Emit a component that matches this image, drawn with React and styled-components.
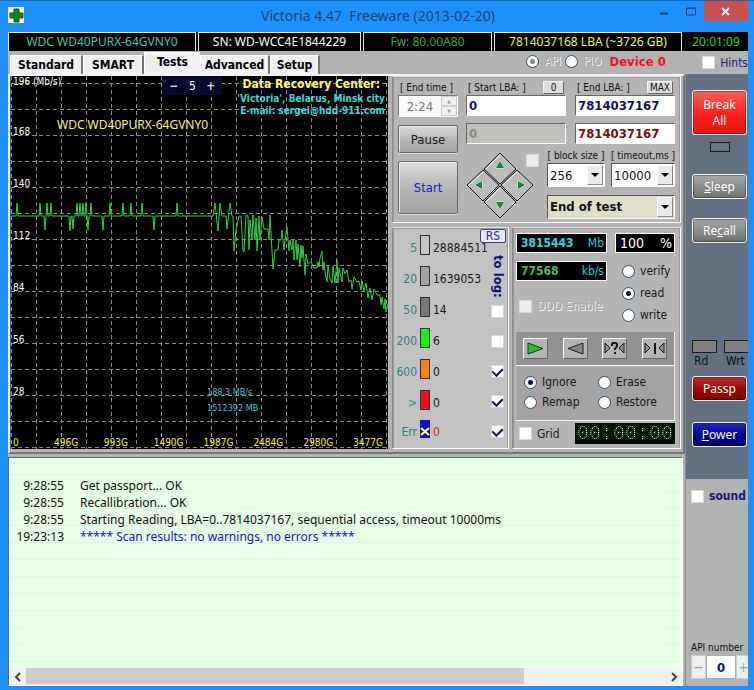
import React from "react";
import styled, { createGlobalStyle, css } from "styled-components";

const GlobalStyle = createGlobalStyle`
  * { box-sizing: border-box; }
  body {
    margin: 0;
    background: #1e90fa;
    font-family: "DejaVu Sans Condensed", "DejaVu Sans", sans-serif;
    font-size: 12px;
    color: #101010;
  }
  button, input, select { font: inherit; color: inherit; margin: 0; padding: 0; }
  table { border-collapse: collapse; }
`;

const Window = styled.div`
  display: flex;
  flex-direction: column;
  min-height: 100vh;
  padding: 0 6px 4px 8px;
  background: #1e90fa;
  border-top: 1px solid #1868b0;
  overflow: hidden;
`;

/* ---------- title bar ---------- */

const TitleBar = styled.header`
  display: grid;
  grid-template-columns: 1fr auto 1fr;
  height: 31px;
`;

const AppIcon = styled.svg`
  width: 16px;
  height: 16px;
  margin-top: 6px;
`;

const Title = styled.h1`
  margin: 0;
  padding-top: 5px;
  font: 14px/20px "Noto Sans", "Open Sans", sans-serif;
  color: #15427c;
  white-space: pre;
`;

const WindowButtons = styled.div`
  display: flex;
  justify-content: flex-end;
`;

const WindowButton = styled.button`
  display: grid;
  place-items: center;
  width: ${(p) => (p.$close ? 44 : 27)}px;
  height: 20px;
  border: 0;
  background: ${(p) => (p.$close ? "#c9504e" : "transparent")};
`;

/* ---------- drive info ---------- */

const InfoBar = styled.div`
  display: grid;
  grid-template-columns: 188fr 163fr 129fr 188fr 64fr;
  gap: 2px;
  height: 19px;
  background: #000;
`;

const InfoCell = styled.div`
  border: ${(p) => (p.$plain ? "0" : "1px solid #e8e8e8")};
  padding-top: ${(p) => (p.$plain ? 1 : 0)}px;
  color: ${(p) => p.$color};
  font-family: "Noto Sans", "Open Sans", sans-serif;
  font-size: 12px;
  line-height: 18px;
  text-align: center;
  white-space: nowrap;
`;

/* ---------- tabs ---------- */

const TabRow = styled.div`
  display: flex;
  height: 23px;
  background: #b3b3b3;
`;

const Tabs = styled.div`
  display: flex;
  flex: 1;
  align-items: flex-end;
  padding-left: 2px;
`;

const Tab = styled.button`
  width: ${(p) => p.$width}px;
  height: ${(p) => (p.$active ? 22 : 19)}px;
  padding-bottom: ${(p) => (p.$active ? 4 : 0)}px;
  border: 0;
  border-top: 1px solid #fff;
  border-right: ${(p) => (p.$active ? "0" : "2px solid #777")};
  border-left: 1px solid #fff;
  background: #f0f0f0;
  color: #000;
  font-weight: bold;
  font-size: 12px;
  line-height: 16px;
  white-space: nowrap;
`;

const DeviceGroup = styled.div`
  display: flex;
  align-items: center;
  gap: 4px;
  width: 172px;
  height: 20px;
  margin-right: 4px;
`;

const DeviceName = styled.strong`
  margin-left: 4px;
  color: #f4121c;
  font-size: 13px;
`;

/* ---------- shared inputs ---------- */

const CheckLabel = styled.label`
  display: flex;
  align-items: center;
  gap: 5px;
  font-size: 12px;
  font-weight: ${(p) => (p.$bold ? "bold" : "normal")};
  color: ${(p) => p.$color || "#181818"};
  white-space: nowrap;
  ${(p) =>
    p.$off &&
    css`
      color: #a6a6a6;
      text-shadow: 1px 1px 0 #f2f2f2;
    `}
`;

const CheckInput = styled.input.attrs({ type: "checkbox" })`
  appearance: none;
  display: block;
  flex: none;
  width: 13px;
  height: 13px;
  border: 1px solid #d8d8d8;
  background: ${(p) => (p.disabled ? "#ececec" : "#fff")};
  &:checked::after {
    content: "";
    display: block;
    width: 5px;
    height: 8px;
    margin: 0 auto;
    border: solid #101048;
    border-width: 0 2px 2px 0;
    transform: rotate(45deg);
  }
`;

const RadioInput = styled.input.attrs({ type: "radio" })`
  appearance: none;
  flex: none;
  width: 13px;
  height: 13px;
  border: 1px solid #33536e;
  border-radius: 50%;
  background: #fcfeff;
  &:checked {
    background: radial-gradient(circle, ${(p) => (p.disabled ? "#888" : "#08083c")} 2px, #fcfeff 3px);
  }
`;

const PushButton = styled.button`
  height: ${(p) => p.$height}px;
  border: 1px solid #686868;
  border-radius: 2px;
  background: linear-gradient(#dadada, #b4b4b4 55%, #a4a4a4);
  box-shadow: inset 1px 1px 0 #eaeaea, 0 1px 0 #ddd;
  color: ${(p) => p.$color || "#181818"};
  font-size: 13px;
`;

const TinyButton = styled.button`
  width: ${(p) => p.$width}px;
  height: 13px;
  border: 1px solid #666;
  border-color: #f8f8f8 #666 #666 #f8f8f8;
  background: #dedede;
  font-size: 10px;
  line-height: 10px;
`;

/* ---------- page body ---------- */

const Body = styled.div`
  display: flex;
  flex: 1;
`;

const Main = styled.main`
  display: flex;
  flex: 1;
  min-width: 0;
  flex-direction: column;
  background: #b3b3b3;
`;

const TestsPanel = styled.section`
  display: flex;
  border: 2px solid #f4f4f4;
  border-bottom-color: #777;
  border-right-color: #777;
  padding-bottom: 3px;
`;

/* ---------- speed graph ---------- */

const Graph = styled.div`
  position: relative;
  flex: 1;
  min-width: 0;
  height: 373px;
  border-left: 1px solid #555;
  background: #000;
`;

const GraphPlot = styled.svg`
  position: absolute;
  inset: 0;
  width: 100%;
  height: 100%;
`;

const GraphOverlay = styled.div`
  position: relative;
  display: flex;
  height: 100%;
  padding-left: 2px;
`;

const SpeedScale = styled.div`
  display: flex;
  flex-direction: column;
  width: 44px;
  color: #fff;
  font-size: 10px;
  line-height: 12px;
  white-space: nowrap;
`;

const SpeedMark = styled.span`
  height: 52px;
  &:first-child { height: 50px; }
`;

const GraphName = styled.div`
  flex: 1;
  padding-top: 41px;
  color: #f4f470;
  font: 12px/16px "Noto Sans", "Open Sans", sans-serif;
  white-space: nowrap;
`;

const GraphCorner = styled.div`
  position: absolute;
  top: 0;
  right: 0;
  display: flex;
  justify-content: space-between;
  gap: 15px;
  padding-right: 3px;
`;

const ZoomControl = styled.div`
  display: flex;
  align-items: center;
  justify-content: space-between;
  width: 60px;
  height: 19px;
  padding: 0 7px;
  background: #08082c;
  color: #fff;
  font-size: 12px;
`;

const ZoomButton = styled.button`
  border: 0;
  background: transparent;
  color: #ddd;
  font-weight: bold;
`;

const Credit = styled.div`
  color: #32d8dc;
  font-size: 10px;
  font-weight: bold;
  line-height: 12px;
  text-align: right;
  white-space: nowrap;
`;

const CreditTitle = styled.div`
  padding-right: 5px;
  color: #ffff50;
  font-size: 12px;
  line-height: 17px;
`;

const CursorInfo = styled.div`
  position: absolute;
  left: 52%;
  bottom: 33px;
  color: #38c8cc;
  font-size: 9px;
  line-height: 16px;
`;

const SizeScale = styled.div`
  position: absolute;
  right: 0;
  bottom: 0;
  left: 2px;
  display: grid;
  grid-template-columns: 41px repeat(6, 50fr) 35fr;
  color: #f0f030;
  font-size: 10px;
  line-height: 12px;
`;

/* ---------- controls ---------- */

const Controls = styled.div`
  display: flex;
  flex-direction: column;
  gap: 4px;
  width: 295px;
  padding: 0 2px 0 4px;
`;

const Frame = styled.div`
  border: 1px solid #fff;
  border-left-color: #8c8c8c;
  border-top-color: #e4e4e4;
  box-shadow: inset 1px 1px 0 #999, inset -1px 0 0 #999;
  background: ${(p) => p.$tone || "#b5b5b5"};
`;

const RangeFrame = styled(Frame)`
  display: flex;
  gap: 8px;
  height: 147px;
  padding: 4px 5px;
`;

const ActionColumn = styled.div`
  display: flex;
  flex-direction: column;
  width: 60px;
`;

const RangeColumn = styled.div`
  display: flex;
  flex: 1;
  min-width: 0;
  flex-direction: column;
`;

const FieldHead = styled.div`
  display: flex;
  justify-content: space-between;
  height: 14px;
  padding: 0 2px;
  font-size: 10px;
  line-height: 14px;
  white-space: nowrap;
`;

const TimeSpinner = styled.div`
  display: flex;
  height: 22px;
  margin-bottom: 8px;
  border: 1px solid #888;
  border-color: #777 #fff #fff #777;
  background: #fafafa;
`;

const TimeInput = styled.input`
  flex: 1;
  width: 30px;
  border: 0;
  background: transparent;
  color: #777;
  font-size: 13px;
  text-align: center;
`;

const SpinArrows = styled.div`
  display: grid;
  width: 16px;
`;

const SpinArrow = styled.button`
  display: grid;
  place-items: center;
  border: 1px solid #ccc;
  background: #f0f0f0;
  color: #999;
  font-size: 5px;
  line-height: 5px;
`;

const StartHolder = styled.div`
  display: grid;
  margin-top: 8px;
`;

const LbaGrid = styled.div`
  display: grid;
  grid-template-columns: 1fr 1fr;
  column-gap: 9px;
`;

const LbaInput = styled.input`
  width: 100%;
  height: 21px;
  margin-bottom: 7px;
  padding-left: 2px;
  border: 1px solid #888;
  border-color: #666 #fff #fff #666;
  background: ${(p) => (p.disabled ? "#c0c0bc" : "#fff")};
  color: ${(p) => p.$color};
  font-size: 13px;
  font-weight: bold;
`;

const SeekRow = styled.div`
  display: flex;
  justify-content: space-between;
`;

const SeekPad = styled.svg`
  width: 68px;
  height: 68px;
`;

const SeekCheck = styled(CheckInput)`
  margin: 3px 0 0 -16px;
`;

const SeekOptions = styled.div`
  display: grid;
  grid-template-columns: 58px 64px;
  column-gap: 6px;
  width: 128px;
  margin-top: -2px;
`;

const SmallLabel = styled.label`
  height: 14px;
  font-size: 10px;
  line-height: 13px;
  white-space: nowrap;
  text-align: center;
`;

const SelectBox = styled.div`
  position: relative;
  display: grid;
  ${(p) => p.$wide && css`
    grid-column: 1 / -1;
    margin-top: 7px;
  `}
`;

const SelectField = styled.select`
  appearance: none;
  width: 100%;
  height: 24px;
  padding-left: 2px;
  border: 1px solid #777;
  border-color: #555 #fff #fff #555;
  border-radius: 0;
  background: ${(p) => (p.$wide ? "#dfdfc9" : "#fff")};
  font-size: 13px;
  font-weight: ${(p) => (p.$wide ? "bold" : "normal")};
`;

const SelectArrow = styled.svg`
  position: absolute;
  top: 2px;
  right: 2px;
  width: 16px;
  height: 20px;
  background: #e9e9e9;
  border: 1px solid #fff;
  border-right-color: #888;
  border-bottom-color: #888;
  pointer-events: none;
`;

const LowerControls = styled.div`
  display: grid;
  grid-template-columns: 117px 1fr;
  gap: 3px;
`;

/* ---------- block timing legend ---------- */

const LegendFrame = styled(Frame)`
  display: flex;
  height: 222px;
  padding: 1px 2px 0 0;
`;

const LegendList = styled.div`
  flex: 1;
  min-width: 0;
`;

const LegendRow = styled.div`
  display: grid;
  grid-template-columns: 24px 10px 1fr;
  align-items: center;
  column-gap: 3px;
  height: ${(p) => (p.$last ? 27 : 31)}px;
  font-size: 12px;
  white-space: nowrap;
`;

const LegendLimit = styled.span`
  padding-top: 7px;
  color: #2c8080;
  text-align: right;
`;

const LegendCount = styled.span`
  padding-top: 7px;
  color: ${(p) => p.$color};
`;

const Swatch = styled.span`
  height: 20px;
  border: 1px solid #303030;
  background: ${(p) => p.$color};
`;

const LogColumn = styled.div`
  display: flex;
  flex-direction: column;
  align-items: flex-end;
  width: 26px;
`;

const RsButton = styled.button`
  width: 26px;
  height: 14px;
  border: 1px solid #3838b0;
  border-radius: 2px;
  background: #ececf4;
  color: #2828b0;
  font-size: 12px;
  line-height: 11px;
`;

const ToLog = styled.span`
  height: 48px;
  margin: 12px 0 2px;
  writing-mode: vertical-rl;
  color: #10107c;
  font-size: 13px;
  font-weight: bold;
  line-height: 15px;
`;

const LogChecks = styled.div`
  display: grid;
  row-gap: 17px;
  padding-right: 2px;
`;

/* ---------- scan status ---------- */

const ScanFrame = styled(Frame)`
  display: flex;
  flex-direction: column;
  height: 222px;
  padding: 5px 5px 2px 3px;
`;

const ScanTop = styled.div`
  display: flex;
  justify-content: space-between;
  height: 99px;
`;

const ScanColumn = styled.div`
  display: flex;
  flex-direction: column;
  gap: ${(p) => p.$gap}px;
  width: ${(p) => p.$width}px;
`;

const Readout = styled.output`
  display: flex;
  justify-content: space-between;
  height: 20px;
  padding: 0 2px 0 4px;
  border: 1px solid #fff;
  background: #000;
  color: ${(p) => p.$color};
  font-size: ${(p) => p.$size || 12}px;
  font-weight: ${(p) => (p.$size ? "normal" : "bold")};
  line-height: 18px;
  white-space: nowrap;
`;

const Unit = styled.span`
  color: ${(p) => p.$color || "#32c8d0"};
  font-weight: normal;
`;

const ModeList = styled.div`
  display: grid;
  row-gap: 8px;
  padding: 7px 0 0 7px;
`;

const DumpOption = styled.div`
  padding: 10px 0 0 3px;
`;

const PlayStrip = styled.div`
  display: flex;
  align-items: center;
  justify-content: space-between;
  height: 34px;
  padding: 0 7px;
  border-bottom: 1px solid #f4f4f4;
  border-right: 1px solid #eee;
  background: #939393;
`;

const PlayButton = styled.button`
  display: grid;
  place-items: center;
  width: 25px;
  height: 21px;
  border: 1px solid #555;
  border-color: #f4f4f4 #666 #666 #f4f4f4;
  background: #b4b4b4;
`;

const ActionStrip = styled.div`
  display: grid;
  grid-template-columns: 74px 1fr;
  align-content: start;
  row-gap: 6px;
  height: 54px;
  margin-top: 1px;
  padding: 8px 0 0 8px;
  border-bottom: 1px solid #f4f4f4;
  border-right: 1px solid #eee;
  background: #a3a3a3;
`;

const GridStrip = styled.div`
  display: flex;
  flex: 1;
  align-items: center;
  justify-content: space-between;
  padding-left: 3px;
`;

const Lcd = styled.output`
  width: 100px;
  height: 21px;
  background: #041004;
  text-align: center;
`;

const LcdDigits = styled.span`
  font: 20px/21px "Liberation Mono", monospace;
  color: transparent;
  background: conic-gradient(#dce8cc 25%, #304030 0) 0 0 / 2px 2px;
  background-clip: text;
`;

/* ---------- log ---------- */

const LogPanel = styled.section`
  display: flex;
  flex: 1;
  flex-direction: column;
  margin: 3px 2px 0 0;
  border: 1px solid #666;
  border-right-color: #fff;
  border-bottom-color: #fff;
  background: repeating-linear-gradient(#e6ffe6 0 16px, #dff8df 16px 17px);
`;

const LogBody = styled.div`
  flex: 1;
  padding-top: 19px;
`;

const LogTable = styled.table`
  width: 100%;
  font-family: "Noto Sans", "Open Sans", sans-serif;
  td { height: 17px; padding: 0; line-height: 17px; white-space: nowrap; }
  td:first-child { width: 65px; padding-right: 10px; text-align: right; }
  td:last-child { padding-left: 6px; }
`;

const LogLine = styled.tr`
  td:last-child { color: ${(p) => (p.$done ? "#1414c8" : "#101010")}; }
`;

const ScrollBar = styled.div`
  display: flex;
  height: 17px;
  background: #f2f0f0;
`;

const ScrollButton = styled.button`
  display: grid;
  place-items: center;
  width: 17px;
  border: 0;
  background: transparent;
`;

const ScrollTrack = styled.div`
  flex: 1;
`;

const ScrollThumb = styled.div`
  width: 78%;
  height: 16px;
  background: #cccccc;
`;

/* ---------- sidebar ---------- */

const Sidebar = styled.aside`
  display: flex;
  width: 63px;
  flex-direction: column;
  border-left: 1px solid #8a8a8a;
  background: #b3b3b3;
  overflow: hidden;
`;

const PowerPanel = styled.div`
  display: flex;
  flex-direction: column;
  height: 405px;
  padding: 16px 1px 0 6px;
  background: #627081;
`;

const SideButton = styled.button`
  flex: none;
  height: ${(p) => (p.$tall ? 45 : 25)}px;
  margin-bottom: ${(p) => p.$after}px;
  border: 1px solid #f4f4f4;
  border-radius: 3px;
  box-shadow: inset 0 0 0 1px rgba(0, 0, 0, 0.3);
  background: ${(p) => p.$fill};
  color: #fff;
  font-family: "Noto Sans", "Open Sans", sans-serif;
  font-size: 12px;
  line-height: 16px;
`;

const Led = styled.span`
  display: block;
  flex: none;
  width: ${(p) => p.$width}px;
  height: ${(p) => (p.$small ? 10 : 13)}px;
  border: 1px solid #181818;
  background: ${(p) => (p.$small ? "#667283" : "#808080")};
`;

const BusyHolder = styled.div`
  display: flex;
  justify-content: center;
  margin: 7px 0 22px;
`;

const LedRow = styled.div`
  display: flex;
  flex: none;
  gap: 7px;
  margin: 97px 0 7px;
  font-size: 12px;
  line-height: 16px;
`;

const LedLabel = styled.span`
  display: block;
  padding-left: 2px;
`;

const SidebarLower = styled.div`
  display: flex;
  flex: 1;
  flex-direction: column;
  justify-content: space-between;
  padding: 10px 0 7px 5px;
`;

const ApiBox = styled.div`
  font-size: 10px;
  white-space: nowrap;
`;

const ApiSpinner = styled.div`
  display: grid;
  grid-template-columns: 15px 30px 15px;
  height: 24px;
  margin-top: 2px;
`;

const ApiButton = styled.button`
  border: 1px solid #ccc;
  background: #efefef;
  color: #a0a0a0;
  font-size: 14px;
  line-height: 14px;
`;

const ApiInput = styled.input`
  width: 30px;
  border: 1px solid #aaa;
  background: #fff;
  color: #10106c;
  font-size: 13px;
  font-weight: bold;
  text-align: center;
`;

const TABS = [
  ["Standard", 73], ["SMART", 61], ["Tests", 56], ["Advanced", 70], ["Setup", 50],
];

const LEGEND = [
  ["5", "#c4c4c4", "28884511"], ["20", "#a0a0a0", "1639053"], ["50", "#787878", "14"],
  ["200", "#10f410", "6"], ["600", "#f58208", "0"], [">", "#f01010", "0"],
];

const LOG = [
  ["9:28:55", "Get passport... OK"],
  ["9:28:55", "Recallibration... OK"],
  ["9:28:55", "Starting Reading, LBA=0..7814037167, sequential access, timeout 10000ms"],
  ["19:23:13", "***** Scan results: no warnings, no errors *****"],
];

const BASE = 140;
const SPIKES = [
  [6, 127], [29, 127], [34, 154], [36, 127], [40, 127], [59, 155], [62, 153], [66, 127],
  [69, 127], [72, 127], [75, 127], [77, 154], [80, 127], [92, 154], [99, 127], [112, 127],
  [120, 127], [131, 127], [143, 154], [166, 127],
];
const TAIL = [
  [202, 140], [204, 127], [207, 155], [209, 127], [211, 140], [215, 140], [216, 153], [219, 127],
  [221, 140], [222, 140], [223, 175], [225, 154], [228, 140], [230, 140], [232, 175], [233, 176],
  [235, 139], [237, 140], [238, 174], [239, 144], [241, 164], [242, 139], [244, 164], [245, 142],
  [246, 175], [248, 140], [249, 164], [251, 141], [253, 153], [257, 153], [258, 164], [259, 139],
  [262, 193], [264, 174], [267, 174], [268, 164], [270, 164], [271, 154], [273, 174], [274, 164],
  [276, 151], [278, 175], [279, 164], [281, 174], [282, 163], [283, 184], [285, 164], [286, 184],
  [287, 168], [289, 191], [290, 169], [291, 182], [292, 170], [294, 199], [295, 178], [297, 188],
  [300, 186], [303, 192], [306, 192], [307, 186], [308, 191], [309, 182], [311, 175], [312, 194],
  [313, 186], [314, 196], [316, 206], [317, 190], [319, 203], [321, 207], [322, 190], [324, 207],
  [326, 184], [327, 207], [328, 192], [331, 206], [332, 192], [334, 198], [336, 194], [338, 206],
  [340, 204], [341, 213], [343, 201], [346, 206], [348, 205], [350, 214], [351, 205], [353, 215],
  [355, 207], [357, 222], [359, 212], [361, 224], [363, 213], [366, 219], [369, 219], [370, 229],
  [371, 221], [373, 233], [374, 223], [375, 236], [377, 228],
];
const SPEED_LINE = [
  [0, BASE],
  ...SPIKES.flatMap(([x, y]) => [[x - 1, BASE], [x, y], [x + 1, BASE]]),
  ...TAIL,
].map((p) => p.join(",")).join(" ");

const COLS = Array.from({ length: 16 }, (_, i) => i * 25);
const ROWS = Array.from({ length: 15 }, (_, i) => i * 26 + 7);

function Check({ label, bold, color, disabled }) {
  return (
    <CheckLabel $bold={bold} $color={color} $off={disabled}>
      <CheckInput disabled={disabled} />
      {label}
    </CheckLabel>
  );
}

function Radio({ label, name, checked, disabled }) {
  return (
    <CheckLabel $off={disabled}>
      <RadioInput name={name} defaultChecked={checked} disabled={disabled} />
      {label}
    </CheckLabel>
  );
}

function Dropdown({ id, value, wide, label }) {
  return (
    <SelectBox $wide={wide}>
      <SelectField id={id} $wide={wide} aria-label={label}>
        <option>{value}</option>
      </SelectField>
      <SelectArrow viewBox="0 0 14 18"><path d="M3 7h8l-4 4z" /></SelectArrow>
    </SelectBox>
  );
}

function SpeedGraph() {
  return (
    <Graph>
      <GraphPlot viewBox="0 0 377 373" preserveAspectRatio="none">
        <g stroke="#8a8a8a" strokeDasharray="4 3" shapeRendering="crispEdges">
          {COLS.map((x) => <line key={x} x1={x} x2={x} y1="0" y2="373" />)}
          {ROWS.map((y) => <line key={y} x1="0" x2="377" y1={y} y2={y} />)}
        </g>
        <polyline points={SPEED_LINE} fill="none" stroke="#30d248" />
      </GraphPlot>
      <GraphOverlay>
        <SpeedScale>
          {["196 (Mb/s)", "168", "140", "112", "84", "56", "28"].map((v) => (
            <SpeedMark key={v}>{v}</SpeedMark>
          ))}
        </SpeedScale>
        <GraphName>WDC WD40PURX-64GVNY0</GraphName>
      </GraphOverlay>
      <GraphCorner>
        <ZoomControl>
          <ZoomButton aria-label="Zoom out">−</ZoomButton>5<ZoomButton aria-label="Zoom in">+</ZoomButton>
        </ZoomControl>
        <Credit>
          <CreditTitle>Data Recovery Center:</CreditTitle>
          <div>'Victoria', Belarus, Minsk city</div>
          <div>E-mail: sergei@hdd-911.com</div>
        </Credit>
      </GraphCorner>
      <CursorInfo>
        <div>188,3 MB/s</div>
        <div>1512392 MB</div>
      </CursorInfo>
      <SizeScale>
        {["0", "496G", "993G", "1490G", "1987G", "2484G", "2980G", "3477G"].map((v) => (
          <span key={v}>{v}</span>
        ))}
      </SizeScale>
    </Graph>
  );
}

function RangeControls() {
  return (
    <RangeFrame>
      <ActionColumn>
        <FieldHead><label htmlFor="end-time">[ End time ]</label></FieldHead>
        <TimeSpinner>
          <TimeInput id="end-time" defaultValue="2:24" />
          <SpinArrows>
            <SpinArrow aria-label="Later">▲</SpinArrow>
            <SpinArrow aria-label="Earlier">▼</SpinArrow>
          </SpinArrows>
        </TimeSpinner>
        <PushButton $height={28}>Pause</PushButton>
        <StartHolder><PushButton $height={53} $color="#1c1cb8">Start</PushButton></StartHolder>
      </ActionColumn>
      <RangeColumn>
        <LbaGrid>
          <FieldHead>
            <label htmlFor="start-lba">[ Start LBA: ]</label>
            <TinyButton $width={21}>0</TinyButton>
          </FieldHead>
          <FieldHead>
            <label htmlFor="end-lba">[ End LBA: ]</label>
            <TinyButton $width={26}>MAX</TinyButton>
          </FieldHead>
          <LbaInput id="start-lba" defaultValue="0" $color="#10106c" />
          <LbaInput id="end-lba" defaultValue="7814037167" $color="#10106c" />
          <LbaInput aria-label="Current start" defaultValue="0" disabled $color="#8c8c88" />
          <LbaInput aria-label="Current end" defaultValue="7814037167" $color="#7c0c10" />
        </LbaGrid>
        <SeekRow>
          <SeekPad viewBox="0 0 68 68">
            <g fill="#bcbcbc" stroke="#181818">
              <path d="M34 2l16 16-16 15-16-15z" />
              <path d="M17 19l16 15-16 16L1 34z" />
              <path d="M51 19l16 15-16 16-16-16z" />
              <path d="M34 35l16 16-16 16-16-16z" />
            </g>
            <path d="M34 4L20 18M17 21L3 34M51 21L37 34M34 37L20 51" stroke="#fff" />
            <g fill="#1f8040" stroke="#e4f4e4" strokeWidth="1" paintOrder="stroke">
              <path d="M34 10l4 7h-8zM9 34l7-4v8zM59 34l-7-4v8zM34 58l4-7h-8z" />
            </g>
          </SeekPad>
          <SeekCheck aria-label="Seek lock" disabled />
          <SeekOptions>
            <SmallLabel htmlFor="block">[ block size ]</SmallLabel>
            <SmallLabel htmlFor="timeout">[ timeout,ms ]</SmallLabel>
            <Dropdown id="block" value="256" />
            <Dropdown id="timeout" value="10000" />
            <Dropdown id="after" value="End of test" label="After scan" wide />
          </SeekOptions>
        </SeekRow>
      </RangeColumn>
    </RangeFrame>
  );
}

function Legend() {
  return (
    <LegendFrame $tone="#c2c2c2">
      <LegendList>
        {LEGEND.map(([limit, color, count]) => (
          <LegendRow key={limit}>
            <LegendLimit>{limit}</LegendLimit>
            <Swatch $color={color} />
            <LegendCount $color="#181818">{count}</LegendCount>
          </LegendRow>
        ))}
        <LegendRow $last>
          <LegendLimit>Err</LegendLimit>
          <svg viewBox="0 0 10 18" width="10" height="18">
            <path d="M0 0h10v18H0z" fill="#1010c8" />
            <path d="M0 8h10v7H0z" fill="#202020" />
            <path d="M1 8l8 7M9 8l-8 7" stroke="#fff8c8" strokeWidth="2" />
          </svg>
          <LegendCount $color="#e81c1c">0</LegendCount>
        </LegendRow>
      </LegendList>
      <LogColumn>
        <RsButton>RS</RsButton>
        <ToLog>to log:</ToLog>
        <LogChecks>
          {["50", "200", "600", ">", "Err"].map((v, i) => (
            <CheckInput key={v} aria-label={`Log ${v}`} defaultChecked={i > 1} />
          ))}
        </LogChecks>
      </LogColumn>
    </LegendFrame>
  );
}

function ScanStatus() {
  return (
    <ScanFrame>
      <ScanTop>
        <ScanColumn $width={91} $gap={8}>
          <Readout $color="#30d4e0">3815443 <Unit>Mb</Unit></Readout>
          <Readout $color="#50b85c">77568 <Unit>kb/s</Unit></Readout>
          <DumpOption><Check label="DDD Enable" disabled /></DumpOption>
        </ScanColumn>
        <ScanColumn $width={60} $gap={4}>
          <Readout $color="#fff" $size={14}>100 <Unit $color="#fff">%</Unit></Readout>
          <ModeList>
            <Radio name="mode" label="verify" />
            <Radio name="mode" label="read" checked />
            <Radio name="mode" label="write" />
          </ModeList>
        </ScanColumn>
      </ScanTop>
      <PlayStrip>
        <PlayButton aria-label="Forward">
          <svg width="19" height="15"><path d="M2 2v11l15-5.5z" fill="#28c028" stroke="#104010" /></svg>
        </PlayButton>
        <PlayButton aria-label="Backward">
          <svg width="19" height="15"><path d="M17 2v11L2 7.5z" fill="#858585" stroke="#202020" /></svg>
        </PlayButton>
        <PlayButton aria-label="Random">
          <svg width="23" height="17" stroke="#181818">
            <path d="M2 3v10l5-5zM21 3v10l-5-5z" fill="#909090" />
            <path d="M9 6V4l1-1h3l1 1v2l-2 3v1M12 12v2" fill="none" strokeWidth="2" />
          </svg>
        </PlayButton>
        <PlayButton aria-label="Butterfly">
          <svg width="23" height="17" stroke="#181818">
            <path d="M2 3v10l5-5zM21 3v10l-5-5z" fill="#909090" />
            <path d="M12 3v11" strokeWidth="2" />
          </svg>
        </PlayButton>
      </PlayStrip>
      <ActionStrip>
        <Radio name="bad" label="Ignore" checked />
        <Radio name="bad" label="Erase" />
        <Radio name="bad" label="Remap" />
        <Radio name="bad" label="Restore" />
      </ActionStrip>
      <GridStrip>
        <Check label="Grid" />
        <Lcd><LcdDigits>00:00:00</LcdDigits></Lcd>
      </GridStrip>
    </ScanFrame>
  );
}

export default function App() {
  return (
    <Window>
      <GlobalStyle />
      <TitleBar>
        <AppIcon viewBox="0 0 16 16">
          <path d="M0 0h16v16H0z" fill="#fff" />
          <path d="M6 2h5v4h4v5h-4v4H6v-4H2V6h4z" fill="#0c8414" stroke="#085c0c" />
        </AppIcon>
        <Title>{"Victoria 4.47  Freeware (2013-02-20)"}</Title>
        <WindowButtons>
          <WindowButton aria-label="Minimize">
            <svg width="10" height="10"><path d="M1 7.5h8" stroke="#123c70" strokeWidth="2" /></svg>
          </WindowButton>
          <WindowButton aria-label="Maximize">
            <svg width="10" height="9"><path d="M.5 1h9v7h-9zM0 1.5h10" fill="none" stroke="#123c70" /></svg>
          </WindowButton>
          <WindowButton $close aria-label="Close">
            <svg width="10" height="9"><path d="M1 1l7 7M8 1L1 8" stroke="#fff" strokeWidth="2" /></svg>
          </WindowButton>
        </WindowButtons>
      </TitleBar>

      <InfoBar>
        <InfoCell $color="#40c4ac">WDC WD40PURX-64GVNY0</InfoCell>
        <InfoCell $color="#fff">SN: WD-WCC4E1844229</InfoCell>
        <InfoCell $color="#2ca83c">Fw: 80.00A80</InfoCell>
        <InfoCell $color="#f2f260">7814037168 LBA (~3726 GB)</InfoCell>
        <InfoCell $color="#2cd048" $plain>20:01:09</InfoCell>
      </InfoBar>

      <TabRow>
        <Tabs role="tablist">
          {TABS.map(([name, width]) => (
            <Tab key={name} role="tab" $width={width} $active={name === "Tests"}>{name}</Tab>
          ))}
        </Tabs>
        <DeviceGroup>
          <Radio name="access" label="API" checked disabled />
          <Radio name="access" label="PIO" disabled />
          <DeviceName>Device 0</DeviceName>
        </DeviceGroup>
        <Check label="Hints" color="#241c80" />
      </TabRow>

      <Body>
        <Main>
          <TestsPanel>
            <SpeedGraph />
            <Controls>
              <RangeControls />
              <LowerControls>
                <Legend />
                <ScanStatus />
              </LowerControls>
            </Controls>
          </TestsPanel>
          <LogPanel>
            <LogBody>
              <LogTable>
                <tbody>
                  {LOG.map(([time, text], i) => (
                    <LogLine key={i} $done={i === 3}><td>{time}</td><td>{text}</td></LogLine>
                  ))}
                </tbody>
              </LogTable>
            </LogBody>
            <ScrollBar>
              <ScrollButton aria-label="Scroll left">
                <svg width="8" height="10"><path d="M6 1L2 5l4 4" fill="none" stroke="#444" strokeWidth="2" /></svg>
              </ScrollButton>
              <ScrollTrack><ScrollThumb /></ScrollTrack>
              <ScrollButton aria-label="Scroll right">
                <svg width="8" height="10"><path d="M2 1l4 4-4 4" fill="none" stroke="#444" strokeWidth="2" /></svg>
              </ScrollButton>
            </ScrollBar>
          </LogPanel>
        </Main>

        <Sidebar>
          <PowerPanel>
            <SideButton $tall $fill="linear-gradient(#ff6058, #ff1c1c 60%, #e81010)" $after={0}>
              Break<br />All
            </SideButton>
            <BusyHolder><Led $small $width={20} /></BusyHolder>
            <SideButton $fill="linear-gradient(#a8a8a8, #707070)" $after={19}><u>S</u>leep</SideButton>
            <SideButton $fill="linear-gradient(#a8a8a8, #707070)" $after={0}>Re<u>c</u>all</SideButton>
            <LedRow>
              <div><Led $width={25} /><LedLabel>Rd</LedLabel></div>
              <div><Led $width={25} /><LedLabel>Wrt</LedLabel></div>
            </LedRow>
            <SideButton $fill="linear-gradient(#c03030, #a00808 50%, #800000)" $after={21}>Passp</SideButton>
            <SideButton $fill="linear-gradient(#2828c0, #0404a0 50%, #000070)" $after={0}><u>P</u>ower</SideButton>
          </PowerPanel>
          <SidebarLower>
            <Check label="sound" bold color="#181870" />
            <ApiBox>
              <label htmlFor="api">API number</label>
              <ApiSpinner>
                <ApiButton aria-label="Decrease">−</ApiButton>
                <ApiInput id="api" defaultValue="0" />
                <ApiButton aria-label="Increase">+</ApiButton>
              </ApiSpinner>
            </ApiBox>
          </SidebarLower>
        </Sidebar>
      </Body>
    </Window>
  );
}
